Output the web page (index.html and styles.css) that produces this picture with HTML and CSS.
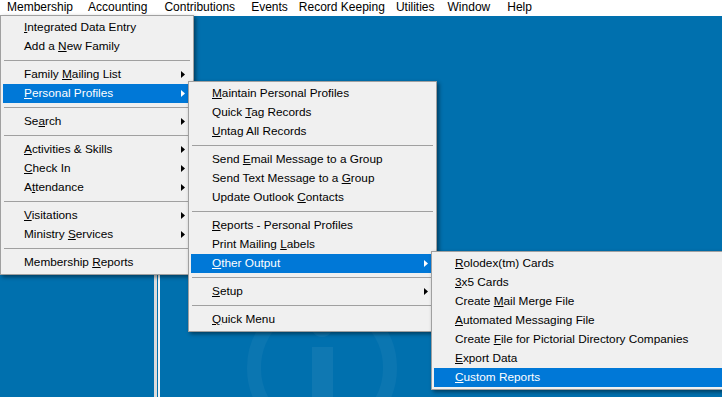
FILE: index.html
```html
<!DOCTYPE html>
<html>
<head>
<meta charset="utf-8">
<link rel="stylesheet" href="styles.css">
</head>
<body>
<div class="menubar">
  <span class="mb-item">Membership</span>
  <span class="mb-item">Accounting</span>
  <span class="mb-item">Contributions</span>
  <span class="mb-item">Events</span>
  <span class="mb-item">Record Keeping</span>
  <span class="mb-item">Utilities</span>
  <span class="mb-item">Window</span>
  <span class="mb-item">Help</span>
</div>
<div class="desktop">
  <svg class="watermark" width="150" height="150" viewBox="0 0 150 150">
    <circle class="wm-ring" cx="75" cy="75" r="68"/>
    <circle class="wm-fill" cx="75" cy="33" r="11"/>
    <rect class="wm-fill" x="65" y="54" width="21" height="96"/>
  </svg>
</div>

<div class="menu menu-1">
  <div class="item"><span><u>I</u>ntegrated Data Entry</span></div>
  <div class="item"><span>Add a <u>N</u>ew Family</span></div>
  <div class="sep"></div>
  <div class="item"><span>Family <u>M</u>ailing List</span><svg class="arrow" width="4" height="7" viewBox="0 0 4 7"><path d="M0 0L4 3.5L0 7z"/></svg></div>
  <div class="item sel"><span><u>P</u>ersonal Profiles</span><svg class="arrow" width="4" height="7" viewBox="0 0 4 7"><path d="M0 0L4 3.5L0 7z"/></svg></div>
  <div class="sep"></div>
  <div class="item"><span>Se<u>a</u>rch</span><svg class="arrow" width="4" height="7" viewBox="0 0 4 7"><path d="M0 0L4 3.5L0 7z"/></svg></div>
  <div class="sep"></div>
  <div class="item"><span><u>A</u>ctivities &amp; Skills</span><svg class="arrow" width="4" height="7" viewBox="0 0 4 7"><path d="M0 0L4 3.5L0 7z"/></svg></div>
  <div class="item"><span><u>C</u>heck In</span><svg class="arrow" width="4" height="7" viewBox="0 0 4 7"><path d="M0 0L4 3.5L0 7z"/></svg></div>
  <div class="item"><span>A<u>t</u>tendance</span><svg class="arrow" width="4" height="7" viewBox="0 0 4 7"><path d="M0 0L4 3.5L0 7z"/></svg></div>
  <div class="sep"></div>
  <div class="item"><span><u>V</u>isitations</span><svg class="arrow" width="4" height="7" viewBox="0 0 4 7"><path d="M0 0L4 3.5L0 7z"/></svg></div>
  <div class="item"><span>Ministry <u>S</u>ervices</span><svg class="arrow" width="4" height="7" viewBox="0 0 4 7"><path d="M0 0L4 3.5L0 7z"/></svg></div>
  <div class="sep"></div>
  <div class="item"><span>Membership <u>R</u>eports</span></div>
</div>

<div class="menu menu-2">
  <div class="item"><span><u>M</u>aintain Personal Profiles</span></div>
  <div class="item"><span>Quick <u>T</u>ag Records</span></div>
  <div class="item"><span><u>U</u>ntag All Records</span></div>
  <div class="sep"></div>
  <div class="item"><span>Send <u>E</u>mail Message to a Group</span></div>
  <div class="item"><span>Send Text Message to a <u>G</u>roup</span></div>
  <div class="item"><span>Update Outlook <u>C</u>ontacts</span></div>
  <div class="sep"></div>
  <div class="item"><span><u>R</u>eports - Personal Profiles</span></div>
  <div class="item"><span>Print Mailing <u>L</u>abels</span></div>
  <div class="item sel"><span><u>O</u>ther Output</span><svg class="arrow" width="4" height="7" viewBox="0 0 4 7"><path d="M0 0L4 3.5L0 7z"/></svg></div>
  <div class="sep"></div>
  <div class="item"><span><u>S</u>etup</span><svg class="arrow" width="4" height="7" viewBox="0 0 4 7"><path d="M0 0L4 3.5L0 7z"/></svg></div>
  <div class="sep"></div>
  <div class="item"><span><u>Q</u>uick Menu</span></div>
</div>

<div class="menu menu-3">
  <div class="item"><span><u>R</u>olodex(tm) Cards</span></div>
  <div class="item"><span><u>3</u>x5 Cards</span></div>
  <div class="item"><span>Create <u>M</u>ail Merge File</span></div>
  <div class="item"><span><u>A</u>utomated Messaging File</span></div>
  <div class="item"><span>Create <u>F</u>ile for Pictorial Directory Companies</span></div>
  <div class="item"><span><u>E</u>xport Data</span></div>
  <div class="item sel"><span><u>C</u>ustom Reports</span></div>
</div>
</body>
</html>
```
FILE: styles.css
```css
html, body {
  margin: 0;
  padding: 0;
}
body {
  width: 722px;
  height: 397px;
  overflow: hidden;
  position: relative;
  font-family: "Liberation Sans", Arial, sans-serif;
  font-size: 11.8px;
  color: #000;
  background: #0070ae;
}
.menubar {
  height: 16px;
  background: #fff;
  display: flex;
  line-height: 14px;
  white-space: nowrap;
  font-size: 12px;
}
.mb-item {
  padding: 0 7px;
}
.mb-item:nth-child(2) { margin-left: 1px; }
.mb-item:nth-child(3) { margin-left: 3px; }
.mb-item:nth-child(4) { margin-left: 2px; }
.mb-item:nth-child(5) { margin-left: -3px; }
.mb-item:nth-child(6) { margin-left: -3px; }
.mb-item:nth-child(7) { margin-left: -1px; }
.mb-item:nth-child(8) { margin-left: 3px; }
.desktop {
  position: relative;
  height: 381px;
  background-color: #0070ae;
  background-image: linear-gradient(to right,
    transparent 154px, #dcdcdc 154px, #dcdcdc 157px,
    transparent 157px, transparent 158px,
    #f4f4f4 158px, #f4f4f4 160px, transparent 160px);
  overflow: hidden;
}
.watermark {
  position: absolute;
  left: 247px;
  top: 277px;
}
.wm-ring {
  fill: none;
  stroke: rgba(255, 255, 255, 0.045);
  stroke-width: 14;
}
.wm-fill {
  fill: rgba(255, 255, 255, 0.06);
}
.menu {
  position: absolute;
  background: #f0f0f0;
  border: 1px solid #a0a0a0;
  padding: 2px;
  box-shadow: 2px 2px 4px rgba(0, 0, 0, 0.45);
  white-space: nowrap;
}
.menu-1 {
  left: 0;
  top: 15px;
  width: 188px;
}
.menu-2 {
  left: 188px;
  top: 81px;
  width: 243px;
}
.menu-3 {
  left: 431px;
  top: 251px;
  width: 300px;
}
.item {
  display: flex;
  align-items: center;
  height: 19px;
  line-height: 19px;
  padding: 0 6px 0 21px;
}
.item u {
  text-decoration: underline;
  text-underline-offset: 1px;
}
.item.sel {
  background: #0078d7;
  color: #fff;
}
.arrow {
  margin-left: auto;
  fill: currentColor;
}
.sep {
  height: 9px;
  display: flex;
  align-items: center;
}
.sep::before {
  content: "";
  flex: 1;
  height: 1px;
  margin: 0 1px;
  background: #a0a0a0;
}
```
